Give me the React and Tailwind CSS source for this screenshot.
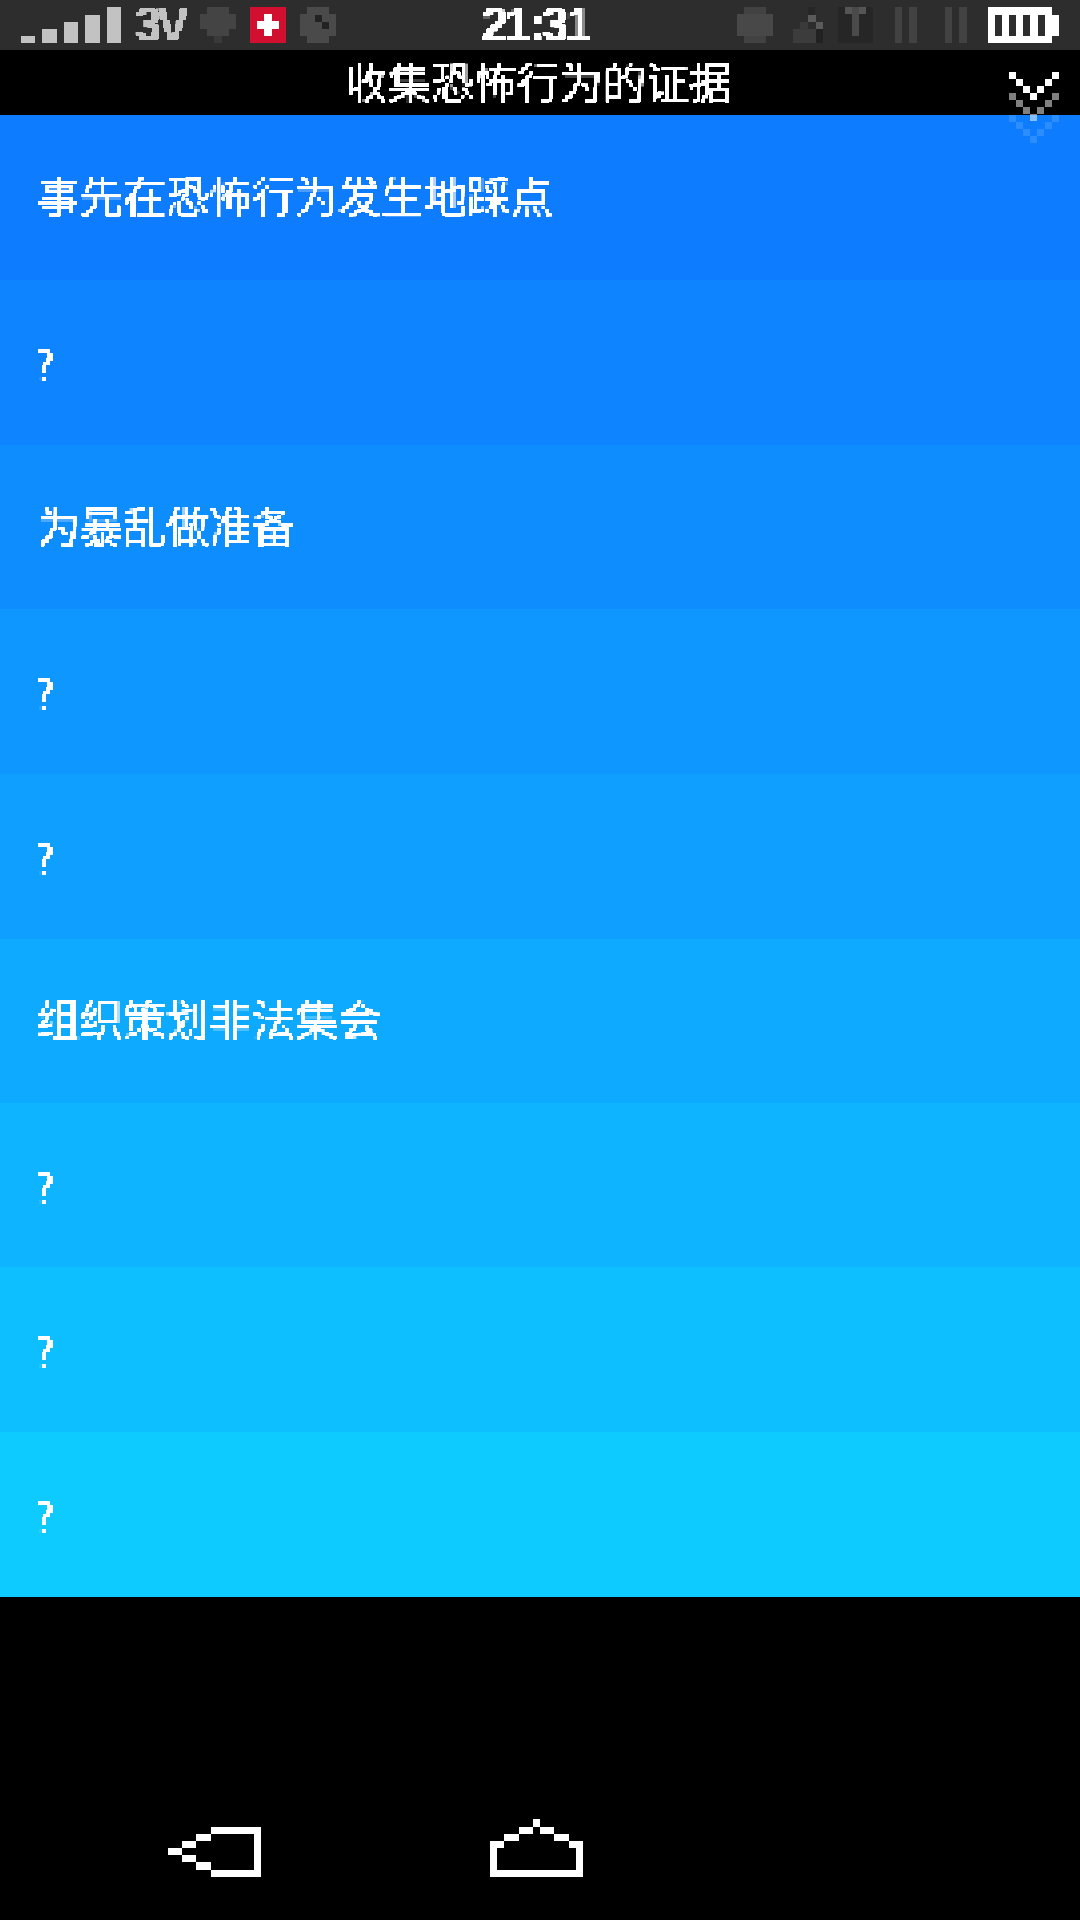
const PIXEL_FILTERS = (
  <svg width="0" height="0" className="absolute">
    <defs>
      <filter id="px" x="0" y="0" width="100%" height="100%" colorInterpolationFilters="sRGB">
        <feFlood x="1" y="1" width="2" height="2" floodColor="#fff" />
        <feComposite width="4" height="4" />
        <feTile result="grid" />
        <feComposite in="SourceGraphic" in2="grid" operator="in" />
        <feMorphology operator="dilate" radius="1" />
        <feComponentTransfer>
          <feFuncA type="linear" slope="4" intercept="-1" />
        </feComponentTransfer>
      </filter>
    </defs>
  </svg>
);

const font = "font-['Noto_Sans_CJK_SC','Noto_Sans',sans-serif]";

function Pix({ w, h, rects, className = "", fill = "#fff" }) {
  return (
    <svg width={w} height={h} viewBox={`0 0 ${w} ${h}`} shapeRendering="crispEdges" className={className}>
      {rects.map(([x, y, rw, rh, c], i) => (
        <rect key={i} x={x} y={y} width={rw} height={rh} fill={c || fill} />
      ))}
    </svg>
  );
}

const rows = [
  ["事先在恐怖行为发生地踩点", "h-[165px] bg-[#0d7cff] pl-[37px] pb-[7px]"],
  ["?", "h-[165px] bg-[#0e84ff] pl-[34px]"],
  ["为暴乱做准备", "h-[164px] bg-[#0e8dff] pl-[37px] pb-[5px]"],
  ["?", "h-[165px] bg-[#0e97ff] pl-[34px]"],
  ["?", "h-[165px] bg-[#0e9fff] pl-[34px]"],
  ["组织策划非法集会", "h-[164px] bg-[#0eaaff] pl-[37px] pb-[7px]"],
  ["?", "h-[164px] bg-[#0eb4ff] pl-[34px]"],
  ["?", "h-[165px] bg-[#0ebfff] pl-[34px]"],
  ["?", "h-[165px] bg-[#0ecbff] pl-[34px]"],
];

function Signal() {
  const c = "#c2c2c2";
  return (
    <Pix w={100} h={36} className="ml-[21px]" rects={[
      [0, 29, 14, 7, c], [21, 22, 15, 14, c], [43, 15, 14, 21, c], [64, 8, 15, 28, c], [86, 0, 14, 36, c],
    ]} />
  );
}

function Blob({ shade = "#444" }) {
  return (
    <Pix w={36} h={36} rects={[
      [7, 0, 22, 7, shade], [0, 7, 36, 15, shade], [7, 22, 22, 7, shade], [14, 29, 8, 7, "#3a3a3a"],
    ]} />
  );
}

function Camera() {
  return (
    <Pix w={36} h={36} rects={[
      [7, 0, 22, 36, "#4a4a4a"], [0, 7, 36, 22, "#4a4a4a"], [15, 8, 7, 7, "#222"], [22, 15, 7, 7, "#222"],
    ]} />
  );
}

function RoundBlob() {
  return (
    <Pix w={36} h={36} rects={[
      [7, 0, 22, 36, "#424242"], [0, 7, 36, 22, "#484848"],
    ]} />
  );
}

function Wifi() {
  return (
    <Pix w={30} h={36} rects={[
      [15, 8, 8, 7, "#5a5a5a"], [23, 15, 7, 7, "#5a5a5a"], [15, 0, 7, 8, "#262626"],
      [7, 15, 8, 7, "#3a3a3a"], [0, 22, 23, 14, "#3c3c3c"], [23, 22, 7, 14, "#222"],
    ]} />
  );
}

function Bars() {
  return <Pix w={22} h={36} rects={[[0, 0, 7, 36, "#424242"], [14, 0, 8, 36, "#424242"]]} />;
}

function Battery() {
  const d = "#2d2d2d";
  return (
    <Pix w={71} h={36} rects={[
      [0, 0, 64, 36], [64, 8, 7, 21],
      [7, 8, 7, 21, d], [21, 8, 7, 21, d], [35, 8, 7, 21, d], [50, 8, 7, 21, d],
    ]} />
  );
}

function Chevron() {
  const v = [[0, 0], [7, 7], [14, 14], [21, 21], [28, 14], [36, 7], [43, 0]];
  const layer = (dy, color) => v.map(([x, y]) => [x, y + dy, 7, 7, color]);
  return (
    <Pix w={50} h={72} rects={[
      ...layer(43, "rgba(255,255,255,0.13)"),
      ...layer(21, "rgba(255,255,255,0.5)"),
      ...layer(0, "#ffffff"),
    ]} className="absolute right-[21px] top-[72px] z-10" />
  );
}

export default function App() {
  return (
    <div className={`relative flex h-[1920px] w-[1080px] flex-col bg-black ${font}`}>
      {PIXEL_FILTERS}
      <div className="grid h-[50px] shrink-0 grid-cols-[1fr_auto_1fr] items-center bg-[#2d2d2d]">
        <div className="flex items-center">
          <Signal />
          <span className="ml-[14px] h-[50px] w-[56px] font-['Liberation_Sans',sans-serif] text-[48px] font-bold leading-[50px] tracking-[-5px] text-[#c2c2c2] [filter:url(#px)]">3V</span>
          <div className="ml-[9px]"><Blob /></div>
          <div className="ml-[14px] flex h-[36px] w-[36px] items-center justify-center bg-[#d0102e]">
            <Pix w={22} h={22} rects={[[7, 0, 8, 22], [0, 7, 22, 8]]} />
          </div>
          <div className="ml-[14px]"><Camera /></div>
        </div>
        <span className="mr-[5px] h-[50px] w-[112px] font-['Liberation_Sans',sans-serif] text-[48px] font-bold leading-[50px] tracking-[-3px] text-white [filter:url(#px)]">21:31</span>
        <div className="flex items-center justify-end pr-[21px]">
          <RoundBlob />
          <div className="ml-[20px]"><Wifi /></div>
          <div className="ml-[15px] flex h-[36px] w-[35px] justify-center bg-[#262626]">
            <Pix w={21} h={36} rects={[[0, 0, 21, 7, "#555"], [7, 0, 7, 29, "#4a4a4a"]]} />
          </div>
          <div className="ml-[22px]"><Bars /></div>
          <div className="ml-[28px]"><Bars /></div>
          <div className="ml-[21px]"><Battery /></div>
        </div>
      </div>

      <div className="flex h-[65px] shrink-0 items-center justify-center bg-black pb-[5px] pr-[3px]">
        <span className="text-[43px] leading-none text-white [filter:url(#px)]">收集恐怖行为的证据</span>
      </div>
      <Chevron />

      <div className="flex flex-col">
        {rows.map(([text, cls], i) => (
          <div key={i} className={`flex items-center ${cls}`}>
            <span className="text-[43px] leading-none text-white [filter:url(#px)]">{text}</span>
          </div>
        ))}
      </div>

      <div className="flex flex-1 items-end">
        <div className="mb-[43px] ml-[168px] flex items-end gap-[229px]">
          <Pix w={93} h={50} rects={[
            [43, 0, 50, 7], [86, 0, 7, 50], [43, 43, 50, 7],
            [28, 7, 15, 7], [14, 14, 14, 7], [0, 21, 14, 7], [14, 28, 14, 7], [28, 35, 15, 8],
          ]} />
          <Pix w={93} h={58} rects={[
            [43, 0, 7, 8], [29, 8, 14, 7], [50, 8, 14, 7], [14, 15, 15, 7], [64, 15, 15, 7],
            [0, 22, 14, 7], [79, 22, 14, 7], [0, 22, 7, 36], [86, 22, 7, 36], [0, 51, 93, 7],
          ]} />
        </div>
      </div>
    </div>
  );
}
